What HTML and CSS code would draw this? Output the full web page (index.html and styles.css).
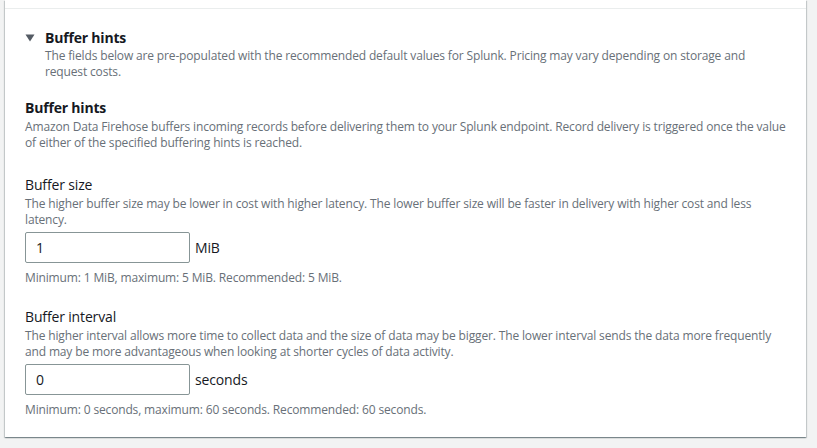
FILE: index.html
```html
<!DOCTYPE html>
<html lang="en">
<head>
<meta charset="utf-8">
<link rel="stylesheet" href="styles.css">
</head>
<body>
<div class="page">
  <div class="card">
    <div class="card-top"></div>
    <div class="card-body">
      <div class="expander">
        <div class="expander-head">
          <svg class="caret" width="10" height="8" viewBox="0 0 10 8"><polygon points="0.5,0.5 9.5,0.5 5,7.5" fill="#545b64"/></svg>
          <span class="expander-title">Buffer hints</span>
        </div>
        <p class="expander-desc">The fields below are pre-populated with the recommended default values for Splunk. Pricing may vary depending on storage and request costs.</p>
      </div>

      <div class="section">
        <h3 class="section-title">Buffer hints</h3>
        <p class="desc">Amazon Data Firehose buffers incoming records before delivering them to your Splunk endpoint. Record delivery is triggered once the value of either of the specified buffering hints is reached.</p>
      </div>

      <div class="field field-first">
        <label class="label">Buffer size</label>
        <p class="desc">The higher buffer size may be lower in cost with higher latency. The lower buffer size will be faster in delivery with higher cost and less latency.</p>
        <div class="input-row">
          <input class="input" type="text" value="1">
          <span class="unit">MiB</span>
        </div>
        <p class="constraint">Minimum: 1 MiB, maximum: 5 MiB. Recommended: 5 MiB.</p>
      </div>

      <div class="field">
        <label class="label">Buffer interval</label>
        <p class="desc">The higher interval allows more time to collect data and the size of data may be bigger. The lower interval sends the data more frequently and may be more advantageous when looking at shorter cycles of data activity.</p>
        <div class="input-row">
          <input class="input" type="text" value="0">
          <span class="unit">seconds</span>
        </div>
        <p class="constraint">Minimum: 0 seconds, maximum: 60 seconds. Recommended: 60 seconds.</p>
      </div>
    </div>
  </div>
</div>
</body>
</html>
```

FILE: styles.css
```css
* { box-sizing: border-box; }
html, body { margin: 0; padding: 0; }
body {
  background: #f2f3f3;
  font-family: "Open Sans", "Noto Sans", Arial, sans-serif;
  color: #16191f;
  width: 817px;
  height: 448px;
  overflow: hidden;
}
.page {
  padding: 0 0 0 5px;
}
.card {
  width: 801px;
  background: #fff;
  box-shadow: 0 1px 1px 0 rgba(0, 28, 36, 0.3), 1px 1px 1px 0 rgba(0, 28, 36, 0.15), -1px 1px 1px 0 rgba(0, 28, 36, 0.15);
}
.card-top {
  height: 9px;
  border-bottom: 1px solid #eaeded;
}
.card-body {
  padding: 19px 14px 19px 20px;
}
p { margin: 0; }
.expander-head {
  display: flex;
  align-items: center;
  height: 20px;
}
.caret {
  margin-right: 10px;
}
.expander-title {
  font-size: 14px;
  font-weight: 700;
  line-height: 20px;
  letter-spacing: -0.2px;
}
.expander-desc {
  padding-left: 20px;
  padding-right: 24px;
  font-size: 12px;
  line-height: 16px;
  color: #687078;
  letter-spacing: -0.15px;
}
.section {
  margin-top: 17px;
}
.section-title {
  margin: 0;
  font-size: 14px;
  font-weight: 700;
  line-height: 22px;
  letter-spacing: -0.2px;
}
.desc {
  font-size: 12px;
  line-height: 16px;
  color: #687078;
  letter-spacing: -0.15px;
}
.field { margin-top: 20px; }
.field-first { margin-top: 23px; }
.label {
  display: block;
  font-size: 14px;
  line-height: 22px;
  letter-spacing: -0.15px;
}
.input-row {
  display: flex;
  align-items: center;
  margin-top: 4px;
}
.input {
  width: 165px;
  height: 31px;
  border: 1px solid #879596;
  border-radius: 2px;
  padding: 0 10px;
  font-family: inherit;
  font-size: 14px;
  color: #16191f;
  outline: none;
}
.unit {
  margin-left: 5px;
  font-size: 14px;
  line-height: 22px;
  letter-spacing: -0.15px;
}
.constraint {
  margin-top: 7px;
  font-size: 12px;
  line-height: 16px;
  color: #687078;
  letter-spacing: -0.15px;
}
```
